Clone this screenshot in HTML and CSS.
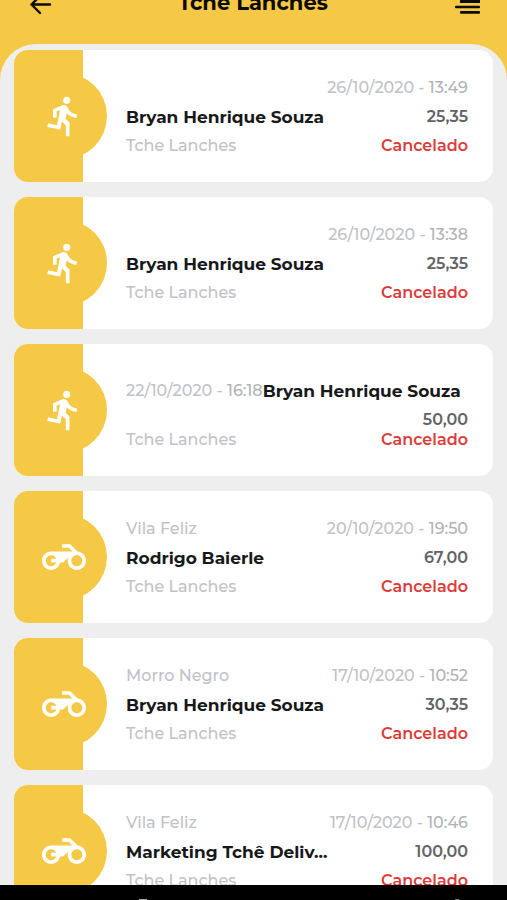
FILE: index.html
```html
<!DOCTYPE html>
<html lang="pt-BR">
  <head>
    <meta charset="UTF-8" />
    <meta name="viewport" content="width=device-width, initial-scale=1.0" />
    <title>Tche Lanches</title>
    <link rel="stylesheet" href="styles.css">
  </head>
  <body>
    <svg width="0" height="0" class="sprite" aria-hidden="true">
      <symbol id="run" viewBox="0 0 24 24">
        <path d="M13.5,5.5C14.59,5.5 15.5,4.58 15.5,3.5C15.5,2.38 14.59,1.5 13.5,1.5C12.39,1.5 11.5,2.38 11.5,3.5C11.5,4.58 12.39,5.5 13.5,5.5M9.89,19.38L10.89,15L13,17V23H15V15.5L12.89,13.5L13.5,10.5C14.79,12 16.79,13 19,13V11C17.09,11 15.5,10 14.69,8.58L13.69,7C13.29,6.38 12.69,6 12,6C11.69,6 11.5,6.08 11.19,6.08L6,8.28V13H8V9.58L9.79,8.88L8.19,17L3.29,16L2.89,18L9.89,19.38Z" />
      </symbol>
      <symbol id="moto" viewBox="0 0 24 24">
        <path d="M19.44 9.03L15.41 5H11v2h3.59l2 2H5c-2.8 0-5 2.2-5 5s2.2 5 5 5c2.46 0 4.45-1.69 4.9-4h1.65l2.77-2.77c-.21.54-.32 1.14-.32 1.77 0 2.8 2.2 5 5 5s5-2.2 5-5c0-2.65-1.97-4.77-4.56-4.97zM7.82 15C7.4 16.15 6.28 17 5 17c-1.63 0-3-1.37-3-3s1.37-3 3-3c1.28 0 2.4.85 2.82 2H5v2h2.82zM19 17c-1.66 0-3-1.34-3-3s1.34-3 3-3 3 1.34 3 3-1.34 3-3 3z" />
      </symbol>
    </svg>

    <header class="header">
      <button class="icon-btn" type="button" aria-label="Voltar">
        <svg width="24" height="24" viewBox="0 0 24 24" fill="none" stroke="#0d0b05" stroke-width="2.4" stroke-linecap="round" stroke-linejoin="round">
          <path d="M22 13.500H3.500M12 5L3.500 13.500L12 22" />
        </svg>
      </button>
      <h1 class="title">Tche Lanches</h1>
      <button class="icon-btn" type="button" aria-label="Menu">
        <svg width="26" height="26" viewBox="0 0 26 26" fill="#0d0b05">
          <path d="M6 0h20v13H6z" />
          <rect x="1" y="15.700" width="25" height="2.500" rx="1" />
          <rect x="6" y="21" width="20" height="2.800" rx="1" />
        </svg>
      </button>
    </header>

    <main class="content">
      <ul class="orders">
        <li class="card">
          <div class="side"><span class="circle"><svg class="icon"><use href="#run" /></svg></span></div>
          <div class="info">
            <div class="row end"><span class="date">26/10/2020 - <time>13:49</time></span></div>
            <div class="row"><strong class="name">Bryan Henrique Souza</strong><span class="price">25,35</span></div>
            <div class="row"><span class="store">Tche Lanches</span><span class="status">Cancelado</span></div>
          </div>
        </li>
        <li class="card">
          <div class="side"><span class="circle"><svg class="icon"><use href="#run" /></svg></span></div>
          <div class="info">
            <div class="row end"><span class="date">26/10/2020 - <time>13:38</time></span></div>
            <div class="row"><strong class="name">Bryan Henrique Souza</strong><span class="price">25,35</span></div>
            <div class="row"><span class="store">Tche Lanches</span><span class="status">Cancelado</span></div>
          </div>
        </li>
        <li class="card">
          <div class="side"><span class="circle"><svg class="icon"><use href="#run" /></svg></span></div>
          <div class="info">
            <div class="row start"><span class="date">22/10/2020 - <time>16:18</time></span><strong class="name">Bryan Henrique Souza</strong></div>
            <div class="row end tight"><span class="price">50,00</span></div>
            <div class="row"><span class="store">Tche Lanches</span><span class="status">Cancelado</span></div>
          </div>
        </li>
        <li class="card">
          <div class="side"><span class="circle"><svg class="icon"><use href="#moto" /></svg></span></div>
          <div class="info">
            <div class="row"><span class="place">Vila Feliz</span><span class="date">20/10/2020 - <time>19:50</time></span></div>
            <div class="row"><strong class="name">Rodrigo Baierle</strong><span class="price">67,00</span></div>
            <div class="row"><span class="store">Tche Lanches</span><span class="status">Cancelado</span></div>
          </div>
        </li>
        <li class="card">
          <div class="side"><span class="circle"><svg class="icon"><use href="#moto" /></svg></span></div>
          <div class="info">
            <div class="row"><span class="place">Morro Negro</span><span class="date">17/10/2020 - <time>10:52</time></span></div>
            <div class="row"><strong class="name">Bryan Henrique Souza</strong><span class="price">30,35</span></div>
            <div class="row"><span class="store">Tche Lanches</span><span class="status">Cancelado</span></div>
          </div>
        </li>
        <li class="card">
          <div class="side"><span class="circle"><svg class="icon"><use href="#moto" /></svg></span></div>
          <div class="info">
            <div class="row"><span class="place">Vila Feliz</span><span class="date">17/10/2020 - <time>10:46</time></span></div>
            <div class="row"><strong class="name">Marketing Tchê Deliv...</strong><span class="price">100,00</span></div>
            <div class="row"><span class="store">Tche Lanches</span><span class="status">Cancelado</span></div>
          </div>
        </li>
      </ul>
    </main>

    <footer class="system-bar">
      <span class="home"></span>
      <span class="back"></span>
    </footer>
  </body>
</html>
```

FILE: styles.css
```css
* {
  box-sizing: border-box;
}

body {
  display: flex;
  flex-direction: column;
  height: 100vh;
  margin: 0;
  overflow: hidden;
  background-color: #f5c845;
  font-family: Montserrat, Inter, sans-serif;
  font-size: 16px;
  line-height: 20px;
}

.sprite {
  position: absolute;
}

/* scrolled up, only the lower half shows */
.header {
  display: flex;
  flex-shrink: 0;
  align-items: center;
  justify-content: space-between;
  height: 82px;
  margin-top: -38px;
  padding: 0 27px 0 28px;
}
.title {
  margin: 0;
  color: #0d0b05;
  font-size: 21px;
  font-weight: 700;
  line-height: 24px;
}
.icon-btn {
  display: flex;
  padding: 0;
  border: 0;
  background: none;
  cursor: pointer;
}

.content {
  flex: 1;
  min-height: 0;
  overflow: hidden;
  border-radius: 36px 36px 0 0;
  background-color: #eee;
}
.orders {
  display: flex;
  flex-direction: column;
  gap: 15px;
  margin: 0;
  padding: 6px 14px 15px;
  list-style-type: none;
}

.card {
  display: flex;
  min-height: 132px;
  overflow: hidden;
  border-radius: 14px;
  background-color: #fff;
}
.side {
  display: flex;
  flex-shrink: 0;
  align-items: center;
  justify-content: flex-end;
  width: 93px;
  background: linear-gradient(to right, #f5c845 69px, #fff 69px);
}
.circle {
  display: flex;
  align-items: center;
  justify-content: center;
  width: 86px;
  height: 86px;
  border-radius: 50%;
  background-color: #f5c845;
}
.icon {
  width: 44px;
  height: 44px;
  fill: #fff;
}

.info {
  display: flex;
  flex: 1;
  flex-direction: column;
  justify-content: flex-end;
  min-width: 0;
  padding: 28px 25px 26px 19px;
}
.row {
  display: flex;
  justify-content: space-between;
  margin-bottom: 9px;
  white-space: nowrap;
}
.row:last-child,
.tight {
  margin-bottom: 0;
}
.end {
  justify-content: flex-end;
}
.start {
  justify-content: flex-start;
}

.date,
.place,
.store {
  color: #bfc2c8;
  font-weight: 500;
}
.date time {
  color: #b0b2b6;
}
.name {
  color: #17181a;
  font-size: 17px;
  font-weight: 700;
}
.price {
  color: #626366;
  font-weight: 600;
}
.status {
  color: #dc3c39;
  font-weight: 600;
}

.system-bar {
  display: flex;
  flex-shrink: 0;
  align-items: flex-end;
  justify-content: space-between;
  height: 15px;
  padding: 0 48px 0 139px;
  background-color: #000;
}
.home {
  width: 8px;
  height: 1px;
  background-color: #aaa;
}
.back {
  width: 4px;
  height: 1px;
  background-color: #777;
}
```
